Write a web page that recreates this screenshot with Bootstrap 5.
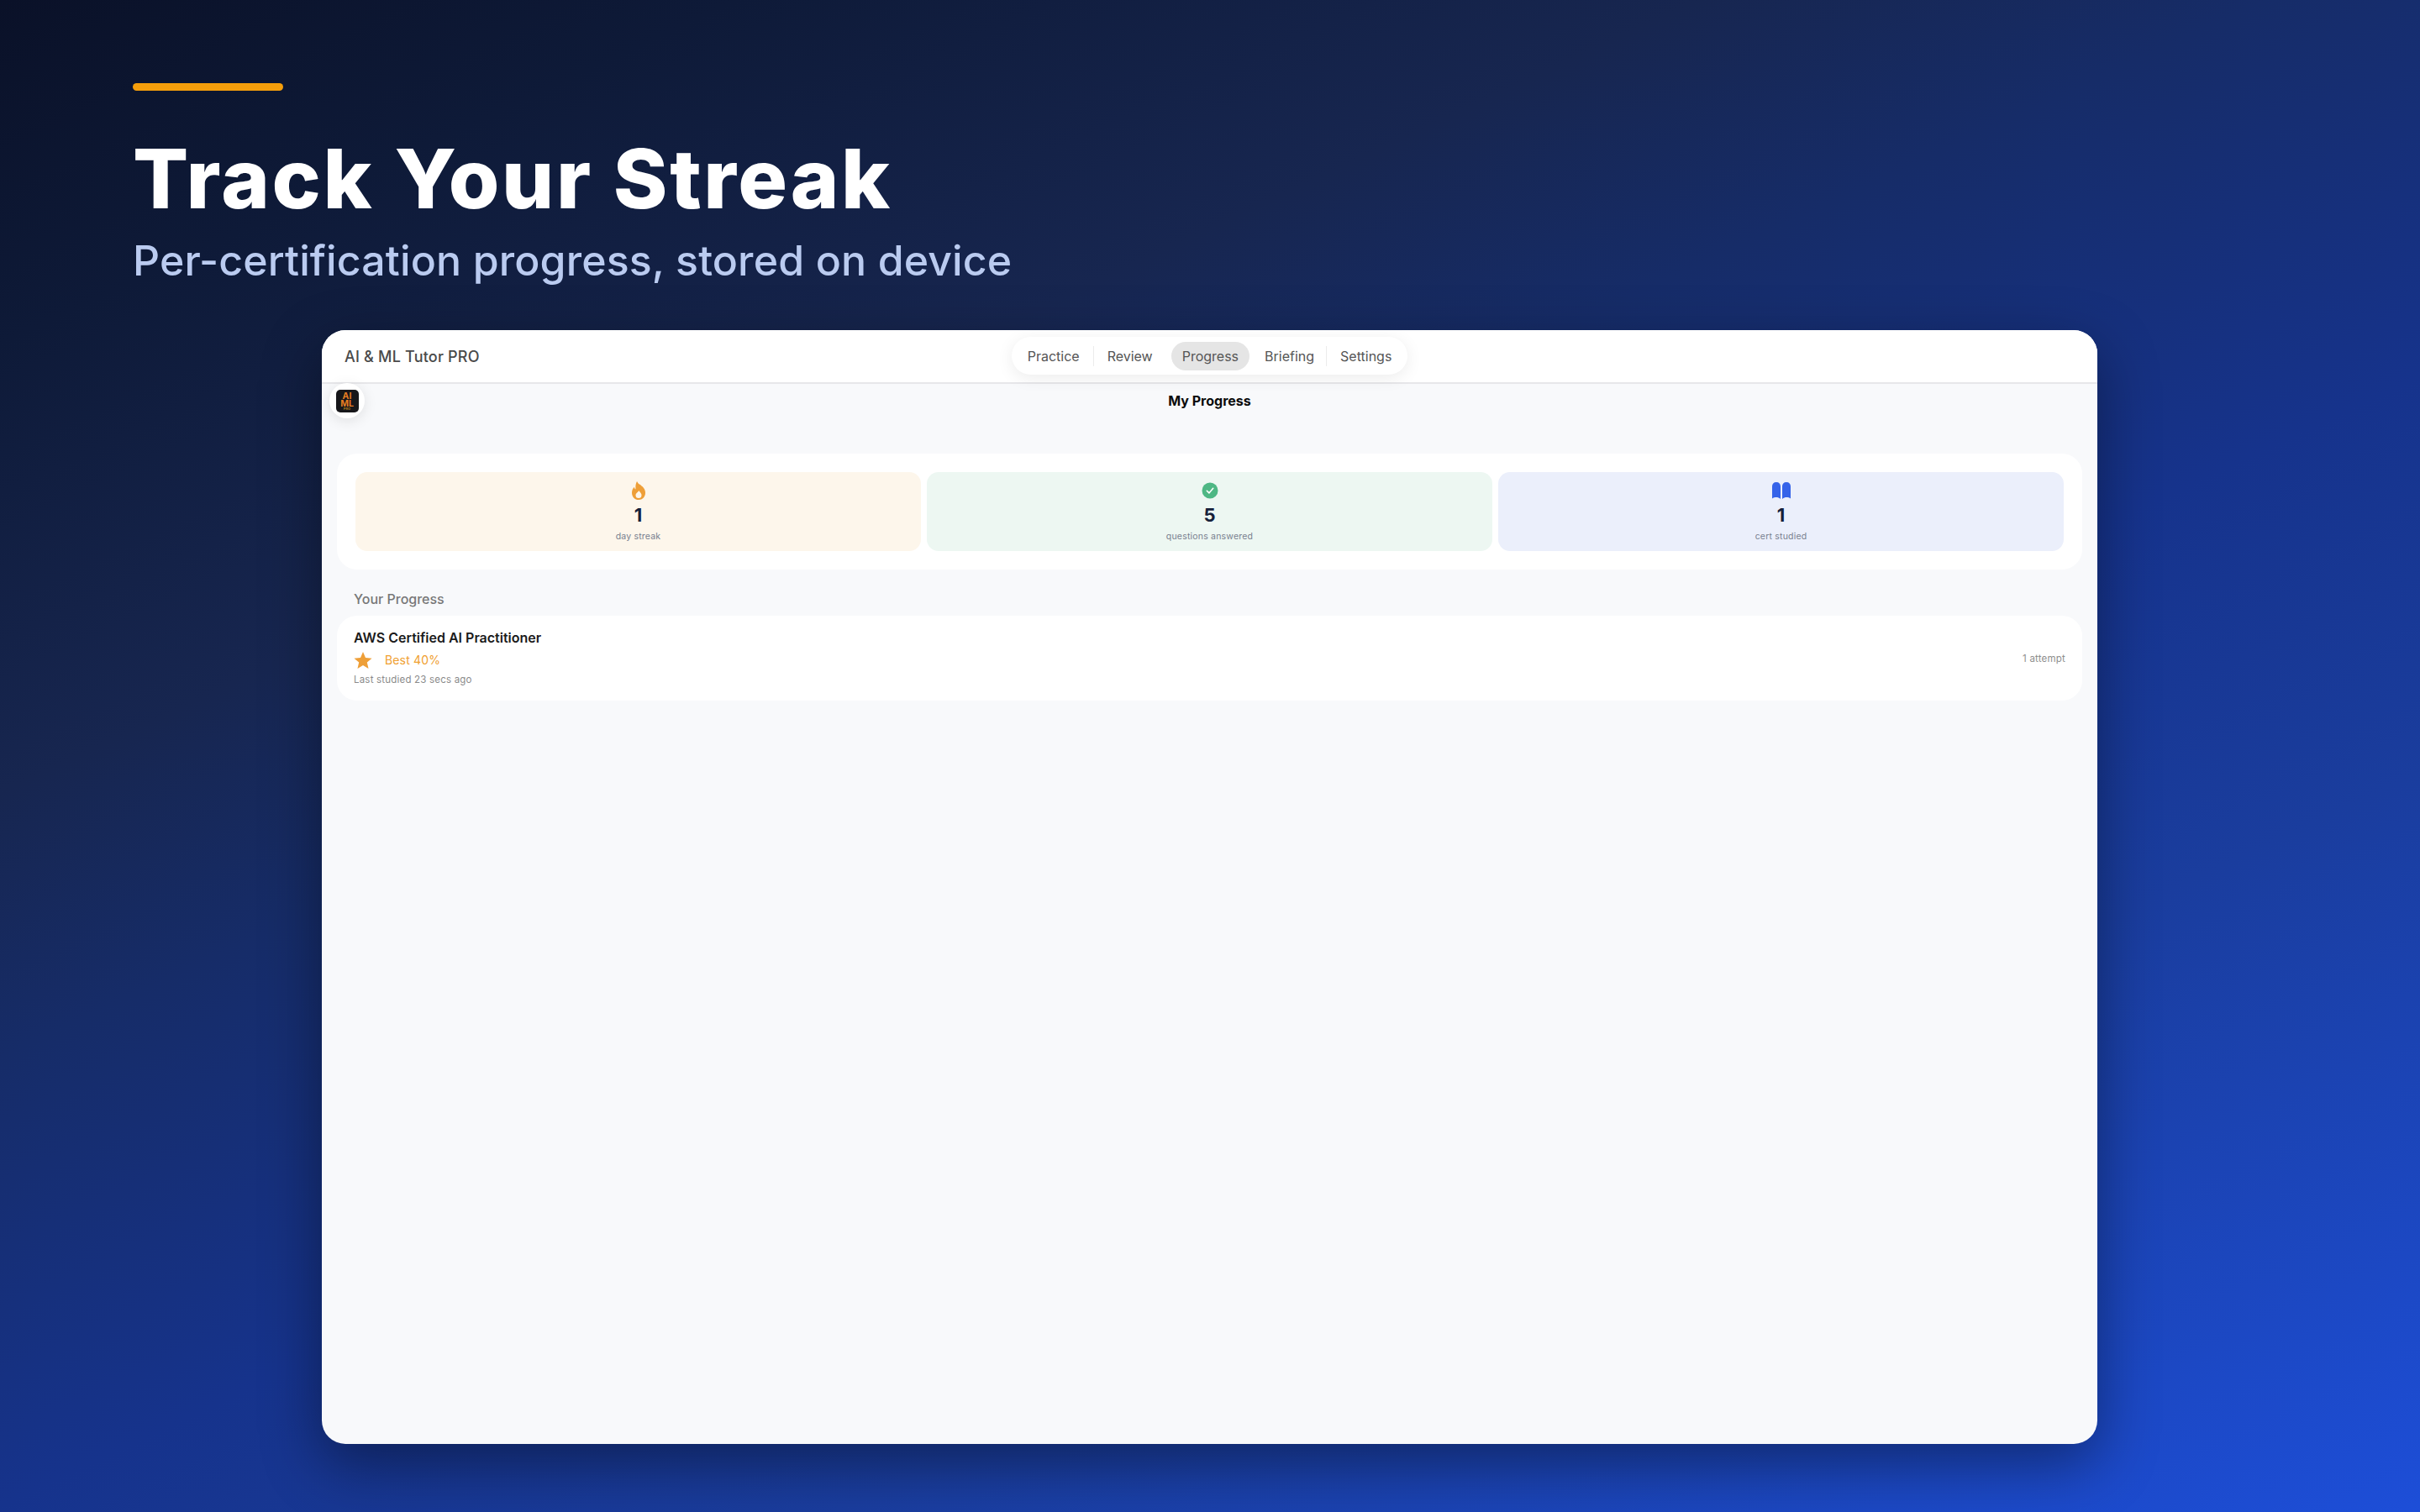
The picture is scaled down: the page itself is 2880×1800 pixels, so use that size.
<!DOCTYPE html>
<html lang="en">
<head>
<meta charset="utf-8">
<title>Track Your Streak</title>
<link href="https://cdn.jsdelivr.net/npm/bootstrap@5.3.0/dist/css/bootstrap.min.css" rel="stylesheet">
<style>
html,body{margin:0;height:1800px;overflow:hidden}
body{font-family:Inter,"Liberation Sans",sans-serif;background:linear-gradient(155deg,#0a1128 0%,#0e1a38 13%,#172650 30%,#162c68 40%,#16338c 57%,#1a3d9e 72%,#1d4ed8 100%);padding:99px 384px 0 158px;width:2880px}
.accent-bar{width:179px;height:9px;border-radius:5px;background:#f59e0b}
.hero-title{font-family:Inter,sans-serif;font-weight:800;font-size:98px;line-height:120px;letter-spacing:2.65px;color:#fff;margin:45px 0 0}
.hero-sub{font-family:Inter,sans-serif;font-weight:500;font-size:50px;line-height:60px;letter-spacing:.13px;color:#bacbf0;margin:7px 0 0}
.app-window{margin:53px 0 0 225px;width:2113px;height:1326px;border-radius:28px;background:#f8f9fb;box-shadow:0 24px 70px rgba(0,0,0,.4);position:relative;overflow:hidden}
.app-head{height:64px;background:#fff;border-bottom:2px solid #e7e7ea;padding:0 27px}
.app-brand{font-size:18px;font-weight:500;letter-spacing:.2px;color:#4a4a4a;flex:1}
.head-spacer{flex:1}
.tab-pill{background:#fff;border-radius:23px;height:45px;padding:0 3px;box-shadow:0 4px 20px rgba(0,0,0,.08);margin:-1px 0 0 0}
.tab-item{font-size:16px;color:#555;padding:0 12px;margin:0 4px;line-height:34px;height:34px;border-radius:17px;white-space:nowrap}
.tab-item.is-on{background:#e5e5e5;padding:0 13px;margin:0 2px 0 6px}
.tab-sep{width:1px;height:24px;background:#ececec}
.tab-sep.is-tight{margin-left:-2px}
.logo-ring{position:absolute;left:9px;top:63px;width:42px;height:42px;border-radius:50%;background:#fff;box-shadow:0 3px 16px rgba(0,0,0,.1)}
.logo-tile{width:27px;height:27px;border-radius:5px;background:#17171a;color:#e67e22;font-size:10.5px;line-height:9px;font-weight:700;text-align:center;padding-top:3px}
.logo-tile small{display:block;font-size:4px;line-height:4px;color:#a8781e}
.page-title{font-size:16px;font-weight:700;color:#0b0b0b;text-align:center;line-height:20px;padding-top:10px}
.stats-panel{margin:53px 18px 0;background:#fff;border-radius:24px;padding:22px 22px 21px;gap:7px;height:138px}
.stat-tile{flex:1;border-radius:14px;text-align:center;height:94px;padding-top:11px}
.stat-orange{background:#fdf6eb}
.stat-green{background:#edf7f2}
.stat-blue{background:#ebeffb}
.stat-icon{display:block;margin:0 auto;height:22px}
.stat-num{font-size:22px;font-weight:700;color:#16203a;line-height:28px;margin-top:4px}
.stat-label{font-size:10.5px;color:#78808f;line-height:14px;letter-spacing:.2px;margin-top:5px}
.section-label{font-size:16px;font-weight:500;color:#777;line-height:20px;margin:25px 38px 0}
.cert-row{margin:10px 18px 0;background:#fff;border-radius:24px;padding:14px 20px 15px;height:101px}
.cert-name{font-size:16px;font-weight:600;color:#1a1a1a;line-height:20px}
.cert-best{font-size:14px;font-weight:400;letter-spacing:.15px;color:#f0a030;line-height:20px;margin-top:7px;gap:15px}
.cert-last{font-size:11.5px;color:#8a8a8a;line-height:15px;letter-spacing:.2px;margin-top:6px}
.cert-attempt{font-size:11.5px;color:#8e8e8e;letter-spacing:.2px;padding-top:3px}
</style>
</head>
<body>
<div class="accent-bar"></div>
<h1 class="hero-title">Track Your Streak</h1>
<p class="hero-sub">Per-certification progress, stored on device</p>
<main class="app-window">
  <header class="app-head d-flex align-items-center">
    <div class="app-brand">AI &amp; ML Tutor PRO</div>
    <nav class="tab-pill d-flex align-items-center">
      <span class="tab-item">Practice</span><span class="tab-sep"></span>
      <span class="tab-item">Review</span>
      <span class="tab-item is-on">Progress</span>
      <span class="tab-item">Briefing</span><span class="tab-sep is-tight"></span>
      <span class="tab-item">Settings</span>
    </nav>
    <div class="head-spacer"></div>
  </header>
  <div class="logo-ring d-flex align-items-center justify-content-center">
    <div class="logo-tile">AI<br>ML<small>PRO</small></div>
  </div>
  <div class="page-title">My Progress</div>
  <section class="stats-panel d-flex">
    <div class="stat-tile stat-orange">
      <svg class="stat-icon" width="18" height="22" viewBox="0 0 18 22"><path fill="#ee9f38" d="M7 0c1.2 2 1.6 2.600 3 3.600 3.600 2.400 7 5.300 7 10.100C17 18.500 13.500 22 9 22S1 18.500 1 13.700C1 11 2 8.500 3.800 6.800 4 8 4.500 9 5.500 9.600 5.200 6.200 5.400 3 7 0Z"/><path fill="#fdf6eb" d="M9.300 11c.5 1.400 3.200 2.800 3.200 5.500A3.500 3.500 0 0 1 9 20a3.500 3.500 0 0 1-3.500-3.500c0-2.500 3-3.500 3.800-5.500Z"/></svg>
      <div class="stat-num">1</div>
      <div class="stat-label">day streak</div>
    </div>
    <div class="stat-tile stat-green">
      <svg class="stat-icon" width="20" height="20" viewBox="0 0 20 20"><circle cx="10" cy="10" r="9.500" fill="#4eb784"/><path fill="none" stroke="#fff" stroke-width="1.600" stroke-linecap="round" stroke-linejoin="round" d="M6.300 10.300l2.600 2.600 4.800-5.600"/></svg>
      <div class="stat-num">5</div>
      <div class="stat-label">questions answered</div>
    </div>
    <div class="stat-tile stat-blue">
      <svg class="stat-icon" width="22" height="20" viewBox="0 0 22 20"><path fill="#3563e9" d="M0 5c0-3 1.800-5 5-5s5 2 5 5v15c-1.800-1.500-3.300-2-5-2s-3.500.4-5 1.500V5ZM12 5c0-3 1.800-5 5-5s5 2 5 5v14.500c-1.500-1.100-3.300-1.500-5-1.500s-3.200.5-5 2V5Z"/></svg>
      <div class="stat-num">1</div>
      <div class="stat-label">cert studied</div>
    </div>
  </section>
  <div class="section-label">Your Progress</div>
  <section class="cert-row d-flex justify-content-between align-items-center">
    <div>
      <div class="cert-name">AWS Certified AI Practitioner</div>
      <div class="cert-best d-flex align-items-center">
        <svg width="22" height="20" viewBox="0 0 24 22"><path fill="#ee9f38" d="M12 0l3.300 7.600 8.300.8-6.300 5.400 1.900 8.100L12 17.600 4.800 21.900l1.900-8.100L.4 8.400l8.300-.8Z"/></svg>
        <span>Best 40%</span>
      </div>
      <div class="cert-last">Last studied 23 secs ago</div>
    </div>
    <div class="cert-attempt">1 attempt</div>
  </section>
</main>
<script src="https://cdn.jsdelivr.net/npm/bootstrap@5.3.0/dist/js/bootstrap.bundle.min.js"></script>
</body>
</html>
